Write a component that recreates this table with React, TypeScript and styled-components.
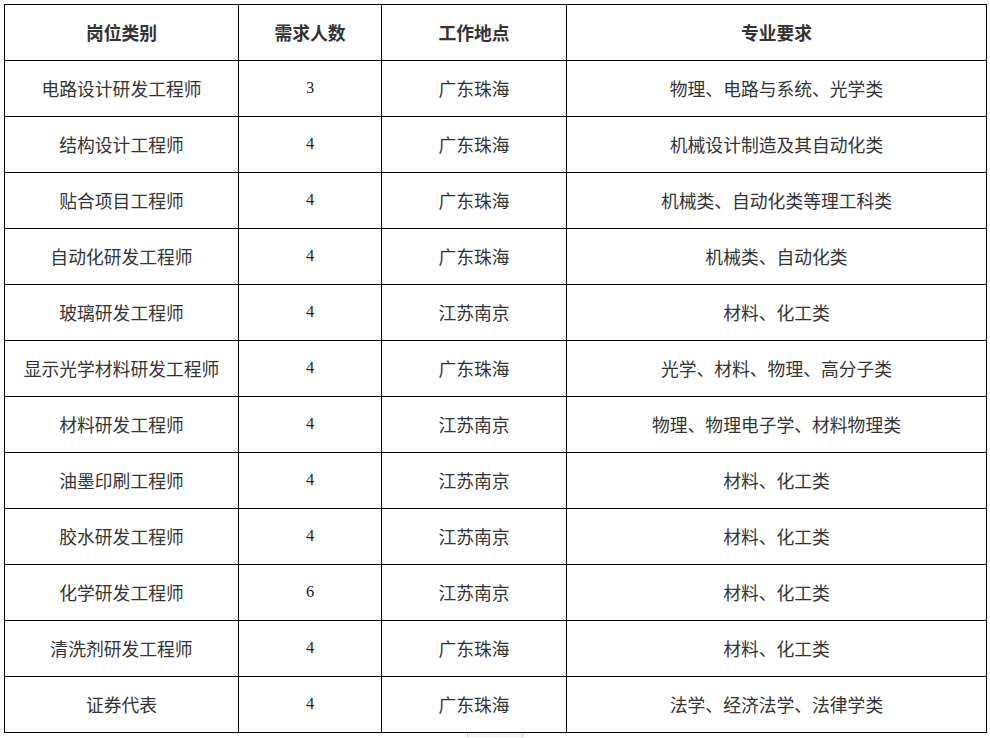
import React from 'react'
import styled, { createGlobalStyle } from 'styled-components'

const GlobalStyle = createGlobalStyle`
  html, body {
    margin: 0;
    padding: 0;
    background: #fff;
  }
  body {
    font-family: "Liberation Serif", "Noto Sans CJK SC", serif;
    color: #333;
  }
`

interface Job {
  title: string
  count: number
  place: string
  major: string
}

const jobs: Job[] = [
  { title: '电路设计研发工程师', count: 3, place: '广东珠海', major: '物理、电路与系统、光学类' },
  { title: '结构设计工程师', count: 4, place: '广东珠海', major: '机械设计制造及其自动化类' },
  { title: '贴合项目工程师', count: 4, place: '广东珠海', major: '机械类、自动化类等理工科类' },
  { title: '自动化研发工程师', count: 4, place: '广东珠海', major: '机械类、自动化类' },
  { title: '玻璃研发工程师', count: 4, place: '江苏南京', major: '材料、化工类' },
  { title: '显示光学材料研发工程师', count: 4, place: '广东珠海', major: '光学、材料、物理、高分子类' },
  { title: '材料研发工程师', count: 4, place: '江苏南京', major: '物理、物理电子学、材料物理类' },
  { title: '油墨印刷工程师', count: 4, place: '江苏南京', major: '材料、化工类' },
  { title: '胶水研发工程师', count: 4, place: '江苏南京', major: '材料、化工类' },
  { title: '化学研发工程师', count: 6, place: '江苏南京', major: '材料、化工类' },
  { title: '清洗剂研发工程师', count: 4, place: '广东珠海', major: '材料、化工类' },
  { title: '证券代表', count: 4, place: '广东珠海', major: '法学、经济法学、法律学类' },
]

const Page = styled.div`
  padding: 4px 3px 0 4px;
`

const Table = styled.table`
  width: 982px;
  border-collapse: collapse;
  table-layout: fixed;
  font-size: 17.8px;
`

const Col = styled.col<{ $w: number }>`
  width: ${(p) => p.$w}px;
`

const HeadCell = styled.th`
  height: 53px;
  border: 1px solid #000;
  font-weight: 700;
  text-align: center;
  vertical-align: middle;
  padding: 0 0 2px;
  color: #333;
`

const Cell = styled.td`
  height: 53px;
  border: 1px solid #000;
  text-align: center;
  vertical-align: middle;
  padding: 0 0 2px;
  white-space: nowrap;
`

const Num = styled.span`
  font-size: 16.5px;
  color: #222;
`

const ScrollThumb = styled.div`
  margin: 1px 0 0 463px;
  width: 54px;
  height: 3px;
  background: #f2f2f2;
  border-left: 1px solid #bbb;
  border-right: 1px solid #bbb;
`

const columns = [
  { label: '岗位类别', w: 234 },
  { label: '需求人数', w: 143 },
  { label: '工作地点', w: 185 },
  { label: '专业要求', w: 420 },
]

export default function App() {
  return (
    <Page>
      <GlobalStyle />
      <Table>
        <colgroup>
          {columns.map((c) => (
            <Col key={c.label} $w={c.w} />
          ))}
        </colgroup>
        <thead>
          <tr>
            {columns.map((c) => (
              <HeadCell key={c.label}>{c.label}</HeadCell>
            ))}
          </tr>
        </thead>
        <tbody>
          {jobs.map((j) => (
            <tr key={j.title}>
              <Cell>{j.title}</Cell>
              <Cell>
                <Num>{j.count}</Num>
              </Cell>
              <Cell>{j.place}</Cell>
              <Cell>{j.major}</Cell>
            </tr>
          ))}
        </tbody>
      </Table>
      <ScrollThumb />
    </Page>
  )
}
